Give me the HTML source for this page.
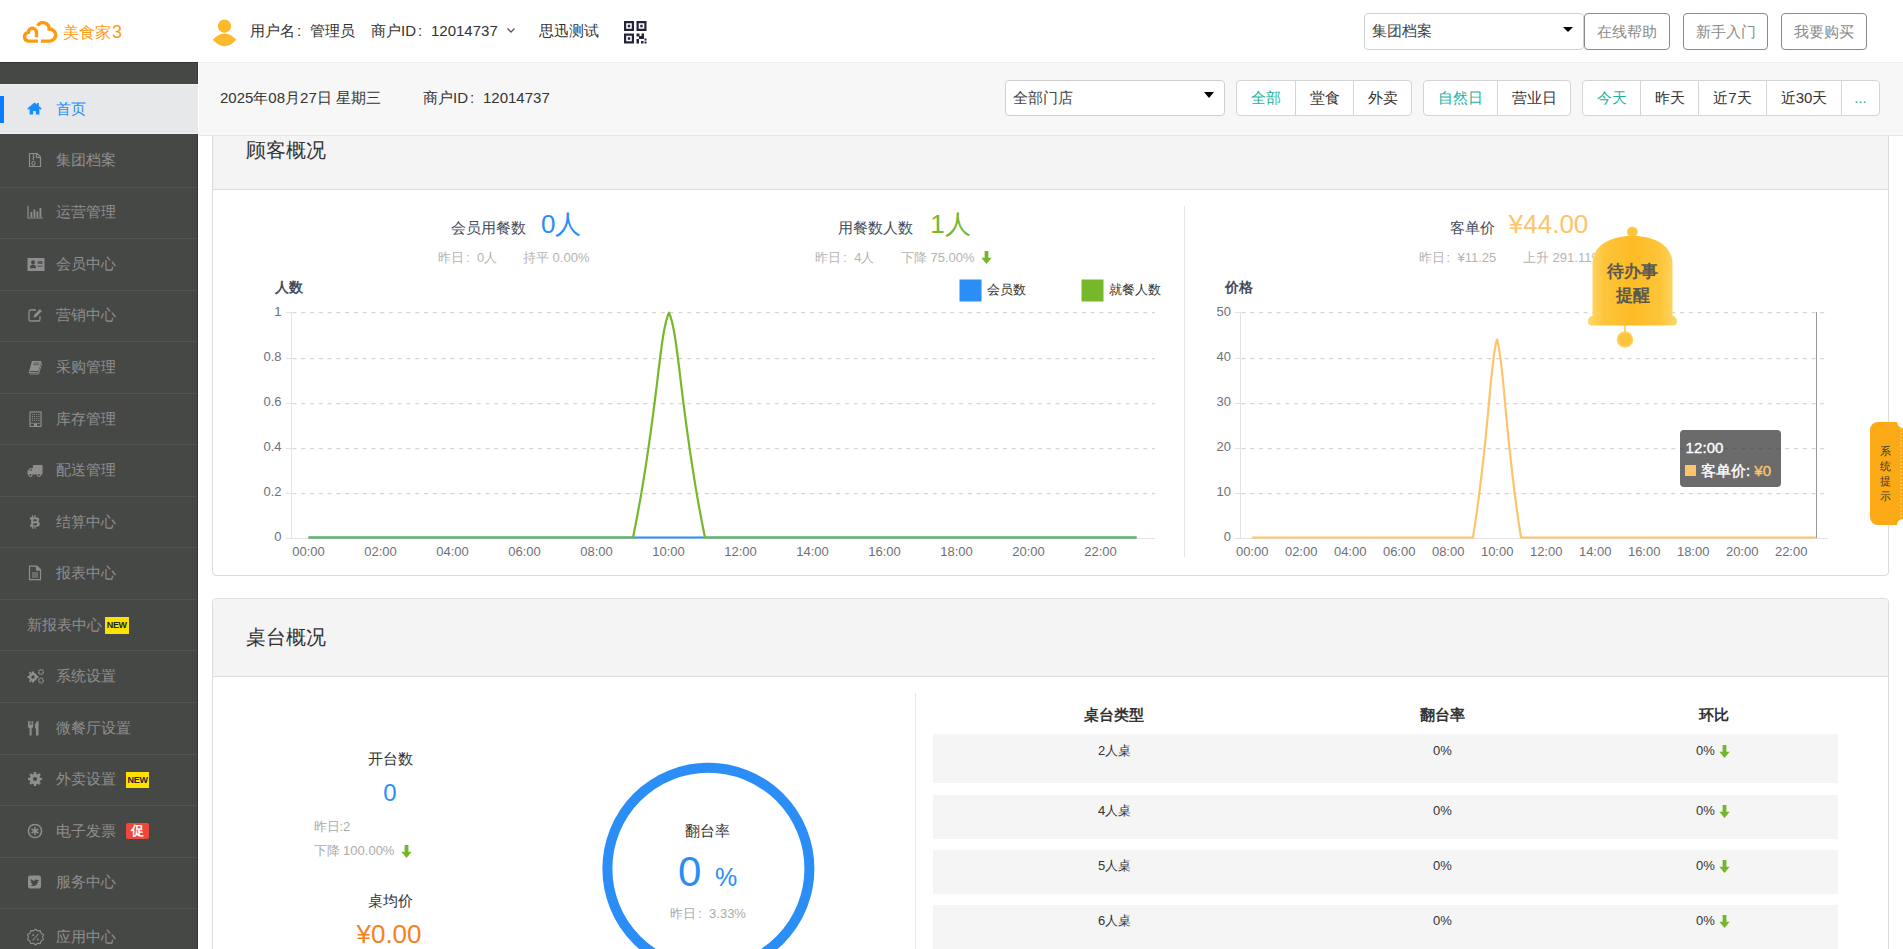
<!DOCTYPE html>
<html><head><meta charset="utf-8">
<style>
*{box-sizing:border-box;margin:0;padding:0}
html,body{width:1903px;height:949px;overflow:hidden;background:#fff;font-family:"Liberation Sans",sans-serif;color:#333}
.t{position:absolute;white-space:nowrap;line-height:20px}
#hdr{position:absolute;left:0;top:0;width:1903px;height:62px;background:#fff}
#side{position:absolute;left:0;top:62px;width:198px;height:887px;background:#464845;border-right:1px solid #363835;border-top:1px solid #363835;overflow:hidden}
#sub{position:absolute;left:199px;top:62px;width:1704px;height:74px;background:#f7f7f7;border-top:1px solid #efefef;border-bottom:1px solid #e6e6e6;z-index:5}
.nav{position:absolute;left:0;width:197px;height:51.54px;border-bottom:1px solid #525451;color:#8e8e8e;font-size:15px}
.nav svg{position:absolute;left:27px;top:50%;margin-top:-8px}
.nav .tx{position:absolute;left:56px;top:50%;margin-top:-10px;line-height:20px;white-space:nowrap}
.new{position:absolute;background:#ffe100;color:#222;font-size:9px;font-weight:bold;line-height:16.5px;height:16.5px;width:23.5px;text-align:center;letter-spacing:-0.3px}
.btn{position:absolute;top:13px;height:37px;border:1px solid #8a8a8a;border-radius:4px;color:#8a8a8a;font-size:15px;line-height:35px;text-align:center}
.sel{position:absolute;border:1px solid #cfcfcf;border-radius:4px;background:#fff;font-size:15px;color:#444}
.sel .arr{position:absolute;width:0;height:0;border-left:5px solid transparent;border-right:5px solid transparent;border-top:6px solid #000}
.grp{position:absolute;top:17px;height:36px;border:1px solid #d4d4d4;border-radius:4px;background:#fff;display:flex}
.grp div{height:34px;line-height:34px;font-size:15px;text-align:center;border-left:1px solid #d4d4d4;color:#333}
.grp div:first-child{border-left:none}
.grp .on{color:#1fb29b}
.card{position:absolute;left:212px;width:1677px;border:1px solid #dcdcdc;border-radius:4px;background:#fff;overflow:hidden}
.chd{position:absolute;left:0;top:0;width:100%;height:78px;background:#f4f4f4;border-bottom:1px solid #dcdcdc;font-size:20px;color:#333;line-height:77px;padding-left:33px}
.nv{position:absolute;left:0;width:197px;border-bottom:1px solid #525451}
.ni{position:absolute;left:27px;width:18px;height:16px}
.ni svg{display:block}
.nt{position:absolute;font-size:15px;color:#8e8e8e;line-height:20px;white-space:nowrap}
.cu{position:absolute;width:23px;height:16px;background:#f0473b;color:#fff;font-size:13px;line-height:16px;text-align:center;border-radius:2px;font-weight:bold}
.cl{display:inline-block;width:1em;text-indent:2px}
</style></head><body>
<!-- HEADER -->
<div id="hdr">
  <svg style="position:absolute;left:22px;top:21px" width="36" height="23" viewBox="0 0 36 23">
    <path d="M14.5,16.3V11.4A4.1,4.1 0 0,0 6.3,11.4A4.4,4.4 0 0,0 6.3,20.1H15.9M15.5,4.6A6.3,6.3 0 0,1 27.1,8.0A6.6,6.05 0 0,1 27.1,20.1H18.9" fill="none" stroke="#ff9a10" stroke-width="3.4"/>
  </svg>
  <div class="t" style="left:63px;top:21px;font-size:16px;color:#ff9a10;line-height:22px">美食家<span style="font-size:18px;margin-left:1px">3</span></div>
  <svg style="position:absolute;left:212px;top:19px" width="26" height="28" viewBox="212 19 26 28">
    <circle cx="224.5" cy="26.2" r="6.6" fill="#fcb92c"/>
    <path d="M212.8,39.8Q224.5,27 236.2,39.8Q224.5,52.6 212.8,39.8Z" fill="#fcb92c"/>
  </svg>
  <div class="t" style="left:250px;top:21px;font-size:15px;color:#333">用户名<span class="cl">:</span>管理员</div>
  <div class="t" style="left:371px;top:21px;font-size:15px;color:#333">商户ID<span class="cl">:</span>12014737</div>
  <svg style="position:absolute;left:506px;top:27px" width="10" height="7" viewBox="0 0 10 7"><path d="M1.5,1.5L5,5L8.5,1.5" fill="none" stroke="#555" stroke-width="1.3"/></svg>
  <div class="t" style="left:539px;top:21px;font-size:15px;color:#333">思迅测试</div>
  <svg style="position:absolute;left:624px;top:21px" width="23" height="23" viewBox="0 0 23 23" fill="#23243a">
    <path d="M0,0h10v10h-10zM2.2,2.2v5.6h5.6v-5.6zM3.8,3.8h2.4v2.4h-2.4z M12.5,0h10v10h-10zM14.7,2.2v5.6h5.6v-5.6zM16.3,3.8h2.4v2.4h-2.4z M0,12.5h10v10h-10zM2.2,14.7v5.6h5.6v-5.6zM3.8,16.3h2.4v2.4h-2.4z M12.5,12.5h3v3h-3zM17.5,12.5h2.5v2.5h-2.5zM15,15h5v3h-5zM12.5,18h2.5v4.5h-2.5zM17,20h2.5v2.5h-2.5zM20.5,17.5h2v2h-2zM20.5,20.5h2v2h-2z"/>
  </svg>
  <div class="sel" style="left:1364px;top:13px;width:220px;height:37px">
    <div class="t" style="left:7px;top:7px">集团档案</div>
    <div class="arr" style="left:198px;top:13px;border-top-width:5px"></div>
  </div>
  <div class="btn" style="left:1584px;width:86px">在线帮助</div>
  <div class="btn" style="left:1683px;width:85px">新手入门</div>
  <div class="btn" style="left:1781px;width:86px">我要购买</div>
</div>
<!-- SIDEBAR -->
<div id="side"></div>
<div style="position:absolute;left:0;top:84px;width:198px;height:50px;background:#e7e8ea;border-top:1px solid #f0f0f0;border-bottom:1px solid #f0f0f0"></div>
<div style="position:absolute;left:0;top:95.6px;width:4px;height:27.5px;background:#0a7cff"></div>
<svg style="position:absolute;left:27px;top:102px" width="15" height="13" viewBox="0 0 15 13"><path d="M7.5,0.5L0.3,6.6l1.1,1.1L2.6,6.7V12.5h3.6V9h2.6v3.5h3.6V6.7l1.2,1l1.1,-1.1L11.8,4.1V1h-1.9v1.5z" fill="#1a8cff"/></svg>
<div class="nt" style="left:56px;top:98.5px;color:#1a8cff">首页</div>
<div class="nv" style="top:134.00px;height:53.60px"></div>
<div class="ni" style="top:152.30px"><svg width="16" height="16" viewBox="0 0 16 16"><path d="M2.5,1.5h7.5l3.5,3.5v9.5h-11z" fill="none" stroke="#8e8e8e" stroke-width="1.2"/><path d="M9.5,1.5v4h4" fill="none" stroke="#8e8e8e" stroke-width="1.2"/><path d="M6,2v1h1v1h-1v1h1v1h-1v1.5h1" fill="none" stroke="#8e8e8e" stroke-width="0.9"/><ellipse cx="6.5" cy="11.2" rx="1.6" ry="2" fill="none" stroke="#8e8e8e" stroke-width="1.1"/></svg></div>
<div class="nt" style="left:56px;top:150.30px">集团档案</div>
<div class="nv" style="top:186.60px;height:52.54px"></div>
<div class="ni" style="top:204.37px"><svg width="16" height="16" viewBox="0 0 16 16"><path d="M1,2v12h15" fill="none" stroke="#8e8e8e" stroke-width="1.2"/><rect x="3.5" y="8" width="1.8" height="5.3" fill="#8e8e8e"/><rect x="6.5" y="5.5" width="1.8" height="7.8" fill="#8e8e8e"/><rect x="9.5" y="7.5" width="1.8" height="5.8" fill="#8e8e8e"/><rect x="12.5" y="4" width="1.8" height="9.3" fill="#8e8e8e"/></svg></div>
<div class="nt" style="left:56px;top:202.37px">运营管理</div>
<div class="nv" style="top:238.14px;height:52.54px"></div>
<div class="ni" style="top:255.91px"><svg width="18" height="16" viewBox="0 0 18 16"><path d="M0.5,2h17v13h-17z" fill="#8e8e8e"/><circle cx="6" cy="6.3" r="2" fill="#464845"/><path d="M3,12.2c0,-3 1.5,-3.6 3,-3.6s3,0.6 3,3.6z" fill="#464845"/><rect x="10.5" y="5" width="5" height="3" fill="#5a5a58"/><rect x="10.5" y="9.6" width="5" height="1.2" fill="#5a5a58"/></svg></div>
<div class="nt" style="left:56px;top:253.91px">会员中心</div>
<div class="nv" style="top:289.68px;height:52.54px"></div>
<div class="ni" style="top:307.45px"><svg width="16" height="16" viewBox="0 0 16 16"><path d="M9,3H3.5a1.5,1.5 0 0,0 -1.5,1.5v8a1.5,1.5 0 0,0 1.5,1.5h8a1.5,1.5 0 0,0 1.5,-1.5V9" fill="none" stroke="#8e8e8e" stroke-width="1.3"/><path d="M6.5,10.5l0.6,-2.6l5.8,-5.8l2,2l-5.8,5.8z" fill="#8e8e8e"/></svg></div>
<div class="nt" style="left:56px;top:305.45px">营销中心</div>
<div class="nv" style="top:341.22px;height:52.54px"></div>
<div class="ni" style="top:358.99px"><svg width="16" height="16" viewBox="0 0 16 16"><path d="M5,2h9.5l-3.5,12h-9.5z" fill="#8e8e8e"/><path d="M2.8,12.6h8.2" stroke="#464845" stroke-width="1"/><path d="M6.5,4h6M6.2,5.7h6" stroke="#5e5e5c" stroke-width="1"/><path d="M14.8,4l-3.2,11h-9" fill="none" stroke="#8e8e8e" stroke-width="0.9"/></svg></div>
<div class="nt" style="left:56px;top:356.99px">采购管理</div>
<div class="nv" style="top:392.76px;height:52.54px"></div>
<div class="ni" style="top:410.53px"><svg width="16" height="16" viewBox="0 0 16 16"><rect x="3" y="1" width="11" height="14.5" fill="none" stroke="#8e8e8e" stroke-width="1.2"/><path d="M5.5,3v7.5M7.6,3v7.5M9.8,3v7.5M11.9,3v7.5" stroke="#8e8e8e" stroke-width="1" stroke-dasharray="1,1"/><rect x="7" y="12.5" width="3" height="3" fill="#8e8e8e"/><path d="M3.5,12.3h10" stroke="#8e8e8e" stroke-width="0.8"/></svg></div>
<div class="nt" style="left:56px;top:408.53px">库存管理</div>
<div class="nv" style="top:444.30px;height:52.54px"></div>
<div class="ni" style="top:462.07px"><svg width="16" height="16" viewBox="0 0 16 16"><path d="M6,3h9.5v9.5h-9.5z" fill="#8e8e8e"/><path d="M6,6h-3l-2.5,3v3.5h5.5z" fill="#8e8e8e"/><path d="M2,8.8l1.5,-2h1.5v2z" fill="#5e5e5c"/><circle cx="3.5" cy="13" r="2" fill="#8e8e8e"/><circle cx="12" cy="13" r="2" fill="#8e8e8e"/><circle cx="3.5" cy="13" r="0.9" fill="#464845"/><circle cx="12" cy="13" r="0.9" fill="#464845"/></svg></div>
<div class="nt" style="left:56px;top:460.07px">配送管理</div>
<div class="nv" style="top:495.84px;height:52.54px"></div>
<div class="ni" style="top:513.61px"><svg width="16" height="16" viewBox="0 0 16 16"><path d="M3,3.2h6.2c2,0 3,1 3,2.4c0,1 -0.6,1.7 -1.4,2c1.2,0.3 2,1.1 2,2.4c0,1.7 -1.2,2.8 -3.3,2.8h-6.5v-2.3h1.2v-5h-1.2z M6.3,5.3v2h2.4c0.7,0 1.1,-0.4 1.1,-1s-0.4,-1 -1.1,-1z M6.3,9.2v2.2h2.7c0.8,0 1.2,-0.4 1.2,-1.1s-0.4,-1.1 -1.2,-1.1z" fill="#8e8e8e"/><path d="M5.5,1.3v2M8,1.3v2M5.5,12.7v2M8,12.7v2" stroke="#8e8e8e" stroke-width="1.3"/></svg></div>
<div class="nt" style="left:56px;top:511.61px">结算中心</div>
<div class="nv" style="top:547.38px;height:52.54px"></div>
<div class="ni" style="top:565.15px"><svg width="16" height="16" viewBox="0 0 16 16"><path d="M2.5,1.2h7.5l3.5,3.5v10h-11z" fill="none" stroke="#8e8e8e" stroke-width="1.2"/><path d="M9.5,1.2v4h4" fill="#8e8e8e" stroke="#8e8e8e" stroke-width="1"/><path d="M5,8h6M5,10h6M5,12h6" stroke="#8e8e8e" stroke-width="1"/></svg></div>
<div class="nt" style="left:56px;top:563.15px">报表中心</div>
<div class="nv" style="top:598.92px;height:52.54px"></div>
<div class="nt" style="left:27px;top:614.69px">新报表中心</div>
<div class="new" style="left:105px;top:617.19px">NEW</div>
<div class="nv" style="top:650.46px;height:52.54px"></div>
<div class="ni" style="top:668.23px"><svg width="18" height="16" viewBox="0 0 18 16"><g fill="#8e8e8e"><circle cx="6" cy="9" r="4.2"/><path d="M5,3.5h2v2h-2zM5,12.5h2v2h-2zM0.5,8h2v2h-2zM9.5,8h2v2h-2zM1.8,4.8l1.4,-1.4l1.4,1.4l-1.4,1.4zM7.4,10.4l1.4,-1.4l1.4,1.4l-1.4,1.4zM1.8,13.2l1.4,1.4l1.4,-1.4l-1.4,-1.4zM7.4,7.6l1.4,1.4l1.4,-1.4l-1.4,-1.4z"/></g><circle cx="6" cy="9" r="1.7" fill="#464845"/><circle cx="14" cy="4" r="2.3" fill="none" stroke="#8e8e8e" stroke-width="1.6" stroke-dasharray="1.2,0.6"/><circle cx="14" cy="12.5" r="2.3" fill="none" stroke="#8e8e8e" stroke-width="1.6" stroke-dasharray="1.2,0.6"/></svg></div>
<div class="nt" style="left:56px;top:666.23px">系统设置</div>
<div class="nv" style="top:702.00px;height:52.54px"></div>
<div class="ni" style="top:719.77px"><svg width="16" height="16" viewBox="0 0 16 16"><path d="M1,1v5c0,1.3 0.8,2 1.6,2.2v7.3h2v-7.3c0.8,-0.2 1.6,-0.9 1.6,-2.2v-5h-1v4h-0.8v-4h-1v4h-0.8v-4z" fill="#8e8e8e"/><path d="M9,15.5v-6.5c-0.8,-0.5 -1,-1.5 -1,-3c0,-3 1.5,-5 3.5,-5v14.5z" fill="#8e8e8e"/></svg></div>
<div class="nt" style="left:56px;top:717.77px">微餐厅设置</div>
<div class="nv" style="top:753.54px;height:52.54px"></div>
<div class="ni" style="top:771.31px"><svg width="16" height="16" viewBox="0 0 16 16"><g fill="#8e8e8e"><circle cx="8" cy="8" r="5.2"/><path d="M6.7,1h2.6v3h-2.6zM6.7,12h2.6v3h-2.6zM1,6.7h3v2.6h-3zM12,6.7h3v2.6h-3zM2.2,4.1l1.9,-1.9l2,2l-1.9,1.9zM10,11.9l1.9,-1.9l2,2l-1.9,1.9zM2.2,11.9l1.9,1.9l2,-2l-1.9,-1.9zM10,4.1l1.9,1.9l2,-2l-1.9,-1.9z"/></g><circle cx="8" cy="8" r="2.1" fill="#464845"/></svg></div>
<div class="nt" style="left:56px;top:769.31px">外卖设置</div>
<div class="new" style="left:125.8px;top:771.81px">NEW</div>
<div class="nv" style="top:805.08px;height:52.54px"></div>
<div class="ni" style="top:822.85px"><svg width="16" height="16" viewBox="0 0 16 16"><circle cx="8" cy="8" r="6.6" fill="none" stroke="#8e8e8e" stroke-width="1.5"/><path d="M8,4v8M4.5,6l7,4M4.5,10l7,-4" stroke="#8e8e8e" stroke-width="1.5"/></svg></div>
<div class="nt" style="left:56px;top:820.85px">电子发票</div>
<div class="cu" style="left:126px;top:822.85px">促</div>
<div class="nv" style="top:856.62px;height:52.54px"></div>
<div class="ni" style="top:874.39px"><svg width="16" height="16" viewBox="0 0 16 16"><rect x="1" y="1.5" width="13" height="13" rx="2" fill="#8e8e8e"/><path d="M3.5,11.5c2.5,1.2 7,0.5 7.5,-4.3l1.3,-1.2l-1.5,0.3c-0.5,-1.2 -2.5,-1.3 -3,0.5c-1.5,0 -3,-0.8 -4,-1.8c-0.5,1.2 0,2.3 0.8,2.8l-0.8,0c0.2,1 1,1.5 1.6,1.6l-0.8,0.2c0.3,0.7 1,1 1.7,1c-1,0.7 -2,0.9 -2.8,0.9z" fill="#464845"/></svg></div>
<div class="nt" style="left:56px;top:872.39px">服务中心</div>
<div class="nv" style="top:908.16px;height:52.54px"></div>
<div class="ni" style="top:928.93px"><svg width="19" height="19" viewBox="0 0 19 19" style="margin-top:-1px;margin-left:-1px"><path d="M9.5,1.2l2.1,1.7l2.7,-0.3l0.8,2.6l2.4,1.4l-1,2.5l1,2.5l-2.4,1.4l-0.8,2.6l-2.7,-0.3l-2.1,1.7l-2.1,-1.7l-2.7,0.3l-0.8,-2.6l-2.4,-1.4l1,-2.5l-1,-2.5l2.4,-1.4l0.8,-2.6l2.7,0.3z" fill="none" stroke="#8e8e8e" stroke-width="1.1" stroke-linejoin="round"/><path d="M6.5,12.5l6,-6.5" stroke="#8e8e8e" stroke-width="1.1"/><circle cx="7.2" cy="7.2" r="0.9" fill="#8e8e8e"/><circle cx="11.8" cy="11.5" r="0.9" fill="#8e8e8e"/></svg></div>
<div class="nt" style="left:56px;top:926.93px">应用中心</div>

<!-- SUBHEADER -->
<div id="sub">
  <div class="t" style="left:21px;top:25px;font-size:15px;color:#333">2025年08月27日 星期三</div>
  <div class="t" style="left:224px;top:25px;font-size:15px;color:#333">商户ID<span class="cl">:</span>12014737</div>
  <div class="sel" style="left:806px;top:17px;width:220px;height:36px">
    <div class="t" style="left:7px;top:7px">全部门店</div>
    <div class="arr" style="left:198px;top:11px"></div>
  </div>
  <div class="grp" style="left:1037px;width:176px"><div class="on" style="width:58px">全部</div><div style="width:58px">堂食</div><div style="width:58px">外卖</div></div>
  <div class="grp" style="left:1224px;width:148px"><div class="on" style="width:73px">自然日</div><div style="width:73px">营业日</div></div>
  <div class="grp" style="left:1383px;width:298px"><div class="on" style="width:57px">今天</div><div style="width:58px">昨天</div><div style="width:68px">近7天</div><div style="width:75px">近30天</div><div class="on" style="width:38px">...</div></div>
</div>
<!-- CARDS -->
<div class="card" style="top:111px;height:465px"><div class="chd">顾客概况</div></div>
<div class="card" style="top:598px;height:400px"><div class="chd">桌台概况</div></div>
<!--MAIN-->
<svg style="position:absolute;left:0;top:0" width="1903" height="949" viewBox="0 0 1903 949"><line x1="1184.5" y1="206" x2="1184.5" y2="557" stroke="#e6e6e6"/><rect x="959.5" y="279.5" width="22" height="22" fill="#2a8ef6"/><rect x="1081.5" y="279.5" width="22" height="22" fill="#76b82a"/><line x1="291" y1="312.7" x2="1155" y2="312.7" stroke="#d6d6d6" stroke-width="1.3" stroke-dasharray="4,4.77" stroke-dashoffset="-1.5"/><line x1="286" y1="312.5" x2="291" y2="312.5" stroke="#e3e3e3"/><line x1="291" y1="358.7" x2="1155" y2="358.7" stroke="#d6d6d6" stroke-width="1.3" stroke-dasharray="4,4.77" stroke-dashoffset="-1.5"/><line x1="286" y1="358.5" x2="291" y2="358.5" stroke="#e3e3e3"/><line x1="291" y1="403.7" x2="1155" y2="403.7" stroke="#d6d6d6" stroke-width="1.3" stroke-dasharray="4,4.77" stroke-dashoffset="-1.5"/><line x1="286" y1="403.5" x2="291" y2="403.5" stroke="#e3e3e3"/><line x1="291" y1="448.7" x2="1155" y2="448.7" stroke="#d6d6d6" stroke-width="1.3" stroke-dasharray="4,4.77" stroke-dashoffset="-1.5"/><line x1="286" y1="448.5" x2="291" y2="448.5" stroke="#e3e3e3"/><line x1="291" y1="493.7" x2="1155" y2="493.7" stroke="#d6d6d6" stroke-width="1.3" stroke-dasharray="4,4.77" stroke-dashoffset="-1.5"/><line x1="286" y1="493.5" x2="291" y2="493.5" stroke="#e3e3e3"/><line x1="286" y1="538.5" x2="291" y2="538.5" stroke="#e3e3e3"/><line x1="291" y1="538.5" x2="1155" y2="538.5" stroke="#e3e3e3"/><line x1="291.5" y1="312" x2="291.5" y2="538" stroke="#e3e3e3"/><line x1="1240" y1="312.7" x2="1828" y2="312.7" stroke="#d6d6d6" stroke-width="1.3" stroke-dasharray="4,4.77" stroke-dashoffset="-1.5"/><line x1="1235" y1="312.5" x2="1240" y2="312.5" stroke="#e3e3e3"/><line x1="1240" y1="358.7" x2="1828" y2="358.7" stroke="#d6d6d6" stroke-width="1.3" stroke-dasharray="4,4.77" stroke-dashoffset="-1.5"/><line x1="1235" y1="358.5" x2="1240" y2="358.5" stroke="#e3e3e3"/><line x1="1240" y1="403.7" x2="1828" y2="403.7" stroke="#d6d6d6" stroke-width="1.3" stroke-dasharray="4,4.77" stroke-dashoffset="-1.5"/><line x1="1235" y1="403.5" x2="1240" y2="403.5" stroke="#e3e3e3"/><line x1="1240" y1="448.7" x2="1828" y2="448.7" stroke="#d6d6d6" stroke-width="1.3" stroke-dasharray="4,4.77" stroke-dashoffset="-1.5"/><line x1="1235" y1="448.5" x2="1240" y2="448.5" stroke="#e3e3e3"/><line x1="1240" y1="493.7" x2="1828" y2="493.7" stroke="#d6d6d6" stroke-width="1.3" stroke-dasharray="4,4.77" stroke-dashoffset="-1.5"/><line x1="1235" y1="493.5" x2="1240" y2="493.5" stroke="#e3e3e3"/><line x1="1235" y1="538.5" x2="1240" y2="538.5" stroke="#e3e3e3"/><line x1="1240" y1="538.5" x2="1828" y2="538.5" stroke="#e3e3e3"/><line x1="1240.5" y1="312" x2="1240.5" y2="538" stroke="#e3e3e3"/><line x1="1816.5" y1="312" x2="1816.5" y2="538" stroke="#9a9a9a"/><path d="M308.5,537.5H1136.5" stroke="#2a8ef6" stroke-width="2.2" fill="none"/><path d="M308.5,537.5H633C657,422.5 659,332.7 669,312.7C679,332.7 681,422.5 705,537.5H1136.5" stroke="#76b82a" stroke-width="2.2" fill="none" stroke-linejoin="round"/><path d="M1252.25,537.5H1473C1489.3,436.3 1490.2,357.2 1497,339.6C1503.8,357.2 1504.7,436.3 1521,537.5H1815.75" stroke="#fdc46b" stroke-width="2.2" fill="none" stroke-linejoin="round"/><line x1="915.5" y1="693" x2="915.5" y2="949" stroke="#e6e6e6"/><circle cx="708.4" cy="868.7" r="101" fill="none" stroke="#2a8ef6" stroke-width="10"/></svg>
<div class="t" style="left:451.0px;top:216.5px;font-size:15px;line-height:21px;color:#464c5b;">会员用餐数</div>
<div class="t" style="left:541.0px;top:206.0px;font-size:26px;line-height:36px;color:#2a8ef6;">0人</div>
<div class="t" style="left:438.0px;top:249.0px;font-size:13px;line-height:18px;color:#b4b4b4;">昨日<span class="cl">:</span>0人</div>
<div class="t" style="left:523.0px;top:249.0px;font-size:13px;line-height:18px;color:#b4b4b4;">持平 0.00%</div>
<div class="t" style="left:838.4px;top:216.5px;font-size:15px;line-height:21px;color:#464c5b;">用餐数人数</div>
<div class="t" style="left:930.3px;top:206.0px;font-size:26px;line-height:36px;color:#76b82a;">1人</div>
<div class="t" style="left:815.2px;top:249.0px;font-size:13px;line-height:18px;color:#b4b4b4;">昨日<span class="cl">:</span>4人</div>
<div class="t" style="left:900.9px;top:249.0px;font-size:13px;line-height:18px;color:#b4b4b4;">下降 75.00%</div>
<div class="t" style="left:1449.7px;top:216.5px;font-size:15px;line-height:21px;color:#464c5b;">客单价</div>
<div class="t" style="left:1508.8px;top:206.0px;font-size:26px;line-height:36px;color:#fdc46b;">¥44.00</div>
<div class="t" style="left:1418.5px;top:249.0px;font-size:13px;line-height:18px;color:#b4b4b4;">昨日<span class="cl">:</span>¥11.25</div>
<div class="t" style="left:1523.0px;top:249.0px;font-size:13px;line-height:18px;color:#b4b4b4;">上升 291.11%</div>
<div class="t" style="left:275.0px;top:277.0px;font-size:14px;line-height:20px;color:#464c5b;font-weight:bold">人数</div>
<div class="t" style="left:1224.6px;top:277.0px;font-size:14px;line-height:20px;color:#464c5b;font-weight:bold">价格</div>
<div class="t" style="left:987.0px;top:281.0px;font-size:13px;line-height:18px;color:#333;">会员数</div>
<div class="t" style="left:1108.6px;top:281.0px;font-size:13px;line-height:18px;color:#333;">就餐人数</div>
<div class="t" style="right:1621.5px;top:302.5px;font-size:13px;line-height:18px;color:#6e7079;">1</div>
<div class="t" style="right:1621.5px;top:347.6px;font-size:13px;line-height:18px;color:#6e7079;">0.8</div>
<div class="t" style="right:1621.5px;top:392.6px;font-size:13px;line-height:18px;color:#6e7079;">0.6</div>
<div class="t" style="right:1621.5px;top:437.7px;font-size:13px;line-height:18px;color:#6e7079;">0.4</div>
<div class="t" style="right:1621.5px;top:482.7px;font-size:13px;line-height:18px;color:#6e7079;">0.2</div>
<div class="t" style="right:1621.5px;top:527.8px;font-size:13px;line-height:18px;color:#6e7079;">0</div>
<div class="t" style="right:672.0px;top:302.5px;font-size:13px;line-height:18px;color:#6e7079;">50</div>
<div class="t" style="right:672.0px;top:347.6px;font-size:13px;line-height:18px;color:#6e7079;">40</div>
<div class="t" style="right:672.0px;top:392.6px;font-size:13px;line-height:18px;color:#6e7079;">30</div>
<div class="t" style="right:672.0px;top:437.7px;font-size:13px;line-height:18px;color:#6e7079;">20</div>
<div class="t" style="right:672.0px;top:482.7px;font-size:13px;line-height:18px;color:#6e7079;">10</div>
<div class="t" style="right:672.0px;top:527.8px;font-size:13px;line-height:18px;color:#6e7079;">0</div>
<div class="t" style="left:308.5px;top:543.0px;width:0;font-size:13px;line-height:18px;color:#6e7079;"><span style="position:absolute;left:0;transform:translateX(-50%)">00:00</span></div>
<div class="t" style="left:1252.2px;top:543.0px;width:0;font-size:13px;line-height:18px;color:#6e7079;"><span style="position:absolute;left:0;transform:translateX(-50%)">00:00</span></div>
<div class="t" style="left:380.5px;top:543.0px;width:0;font-size:13px;line-height:18px;color:#6e7079;"><span style="position:absolute;left:0;transform:translateX(-50%)">02:00</span></div>
<div class="t" style="left:1301.2px;top:543.0px;width:0;font-size:13px;line-height:18px;color:#6e7079;"><span style="position:absolute;left:0;transform:translateX(-50%)">02:00</span></div>
<div class="t" style="left:452.5px;top:543.0px;width:0;font-size:13px;line-height:18px;color:#6e7079;"><span style="position:absolute;left:0;transform:translateX(-50%)">04:00</span></div>
<div class="t" style="left:1350.2px;top:543.0px;width:0;font-size:13px;line-height:18px;color:#6e7079;"><span style="position:absolute;left:0;transform:translateX(-50%)">04:00</span></div>
<div class="t" style="left:524.5px;top:543.0px;width:0;font-size:13px;line-height:18px;color:#6e7079;"><span style="position:absolute;left:0;transform:translateX(-50%)">06:00</span></div>
<div class="t" style="left:1399.2px;top:543.0px;width:0;font-size:13px;line-height:18px;color:#6e7079;"><span style="position:absolute;left:0;transform:translateX(-50%)">06:00</span></div>
<div class="t" style="left:596.5px;top:543.0px;width:0;font-size:13px;line-height:18px;color:#6e7079;"><span style="position:absolute;left:0;transform:translateX(-50%)">08:00</span></div>
<div class="t" style="left:1448.2px;top:543.0px;width:0;font-size:13px;line-height:18px;color:#6e7079;"><span style="position:absolute;left:0;transform:translateX(-50%)">08:00</span></div>
<div class="t" style="left:668.5px;top:543.0px;width:0;font-size:13px;line-height:18px;color:#6e7079;"><span style="position:absolute;left:0;transform:translateX(-50%)">10:00</span></div>
<div class="t" style="left:1497.2px;top:543.0px;width:0;font-size:13px;line-height:18px;color:#6e7079;"><span style="position:absolute;left:0;transform:translateX(-50%)">10:00</span></div>
<div class="t" style="left:740.5px;top:543.0px;width:0;font-size:13px;line-height:18px;color:#6e7079;"><span style="position:absolute;left:0;transform:translateX(-50%)">12:00</span></div>
<div class="t" style="left:1546.2px;top:543.0px;width:0;font-size:13px;line-height:18px;color:#6e7079;"><span style="position:absolute;left:0;transform:translateX(-50%)">12:00</span></div>
<div class="t" style="left:812.5px;top:543.0px;width:0;font-size:13px;line-height:18px;color:#6e7079;"><span style="position:absolute;left:0;transform:translateX(-50%)">14:00</span></div>
<div class="t" style="left:1595.2px;top:543.0px;width:0;font-size:13px;line-height:18px;color:#6e7079;"><span style="position:absolute;left:0;transform:translateX(-50%)">14:00</span></div>
<div class="t" style="left:884.5px;top:543.0px;width:0;font-size:13px;line-height:18px;color:#6e7079;"><span style="position:absolute;left:0;transform:translateX(-50%)">16:00</span></div>
<div class="t" style="left:1644.2px;top:543.0px;width:0;font-size:13px;line-height:18px;color:#6e7079;"><span style="position:absolute;left:0;transform:translateX(-50%)">16:00</span></div>
<div class="t" style="left:956.5px;top:543.0px;width:0;font-size:13px;line-height:18px;color:#6e7079;"><span style="position:absolute;left:0;transform:translateX(-50%)">18:00</span></div>
<div class="t" style="left:1693.2px;top:543.0px;width:0;font-size:13px;line-height:18px;color:#6e7079;"><span style="position:absolute;left:0;transform:translateX(-50%)">18:00</span></div>
<div class="t" style="left:1028.5px;top:543.0px;width:0;font-size:13px;line-height:18px;color:#6e7079;"><span style="position:absolute;left:0;transform:translateX(-50%)">20:00</span></div>
<div class="t" style="left:1742.2px;top:543.0px;width:0;font-size:13px;line-height:18px;color:#6e7079;"><span style="position:absolute;left:0;transform:translateX(-50%)">20:00</span></div>
<div class="t" style="left:1100.5px;top:543.0px;width:0;font-size:13px;line-height:18px;color:#6e7079;"><span style="position:absolute;left:0;transform:translateX(-50%)">22:00</span></div>
<div class="t" style="left:1791.2px;top:543.0px;width:0;font-size:13px;line-height:18px;color:#6e7079;"><span style="position:absolute;left:0;transform:translateX(-50%)">22:00</span></div>
<div class="t" style="left:390.0px;top:748.0px;width:0;font-size:15px;line-height:21px;color:#333;"><span style="position:absolute;left:0;transform:translateX(-50%)">开台数</span></div>
<div class="t" style="left:390.0px;top:776.0px;width:0;font-size:24px;line-height:34px;color:#2a8ef6;"><span style="position:absolute;left:0;transform:translateX(-50%)">0</span></div>
<div class="t" style="left:313.5px;top:818.0px;font-size:13px;line-height:18px;color:#aaa;">昨日:2</div>
<div class="t" style="left:313.5px;top:842.0px;font-size:13px;line-height:18px;color:#aaa;">下降 100.00%</div>
<div class="t" style="left:390.0px;top:890.0px;width:0;font-size:15px;line-height:21px;color:#333;"><span style="position:absolute;left:0;transform:translateX(-50%)">桌均价</span></div>
<div class="t" style="left:389.0px;top:916.0px;width:0;font-size:26px;line-height:36px;color:#f5821f;"><span style="position:absolute;left:0;transform:translateX(-50%)">¥0.00</span></div>
<div class="t" style="left:707.5px;top:819.5px;width:0;font-size:15px;line-height:21px;color:#333;"><span style="position:absolute;left:0;transform:translateX(-50%)">翻台率</span></div>
<div class="t" style="left:678.0px;top:842.0px;font-size:42px;line-height:59px;color:#2a8ef6;">0</div>
<div class="t" style="left:715.0px;top:860.0px;font-size:25px;line-height:35px;color:#2a8ef6;">%</div>
<div class="t" style="left:708.0px;top:904.5px;width:0;font-size:13px;line-height:18px;color:#aaa;"><span style="position:absolute;left:0;transform:translateX(-50%)">昨日<span class="cl">:</span>3.33%</span></div>
<div class="t" style="left:1114.3px;top:704.0px;width:0;font-size:15px;line-height:21px;color:#333;font-weight:bold"><span style="position:absolute;left:0;transform:translateX(-50%)">桌台类型</span></div>
<div class="t" style="left:1442.7px;top:704.0px;width:0;font-size:15px;line-height:21px;color:#333;font-weight:bold"><span style="position:absolute;left:0;transform:translateX(-50%)">翻台率</span></div>
<div class="t" style="left:1713.7px;top:704.0px;width:0;font-size:15px;line-height:21px;color:#333;font-weight:bold"><span style="position:absolute;left:0;transform:translateX(-50%)">环比</span></div>
<div style="position:absolute;left:933px;top:733.7px;width:905px;height:49.6px;background:#f5f5f5"></div>
<div class="t" style="left:1114.5px;top:742.0px;width:0;font-size:13px;line-height:18px;color:#333;"><span style="position:absolute;left:0;transform:translateX(-50%)">2人桌</span></div>
<div class="t" style="left:1442.5px;top:742.0px;width:0;font-size:13px;line-height:18px;color:#333;"><span style="position:absolute;left:0;transform:translateX(-50%)">0%</span></div>
<div class="t" style="left:1696.0px;top:742.0px;font-size:13px;line-height:18px;color:#333;">0%</div>
<div style="position:absolute;left:933px;top:794.8px;width:905px;height:44.4px;background:#f5f5f5"></div>
<div class="t" style="left:1114.5px;top:802.0px;width:0;font-size:13px;line-height:18px;color:#333;"><span style="position:absolute;left:0;transform:translateX(-50%)">4人桌</span></div>
<div class="t" style="left:1442.5px;top:802.0px;width:0;font-size:13px;line-height:18px;color:#333;"><span style="position:absolute;left:0;transform:translateX(-50%)">0%</span></div>
<div class="t" style="left:1696.0px;top:802.0px;font-size:13px;line-height:18px;color:#333;">0%</div>
<div style="position:absolute;left:933px;top:849.6px;width:905px;height:44.4px;background:#f5f5f5"></div>
<div class="t" style="left:1114.5px;top:857.0px;width:0;font-size:13px;line-height:18px;color:#333;"><span style="position:absolute;left:0;transform:translateX(-50%)">5人桌</span></div>
<div class="t" style="left:1442.5px;top:857.0px;width:0;font-size:13px;line-height:18px;color:#333;"><span style="position:absolute;left:0;transform:translateX(-50%)">0%</span></div>
<div class="t" style="left:1696.0px;top:857.0px;font-size:13px;line-height:18px;color:#333;">0%</div>
<div style="position:absolute;left:933px;top:905.4px;width:905px;height:44.4px;background:#f5f5f5"></div>
<div class="t" style="left:1114.5px;top:912.0px;width:0;font-size:13px;line-height:18px;color:#333;"><span style="position:absolute;left:0;transform:translateX(-50%)">6人桌</span></div>
<div class="t" style="left:1442.5px;top:912.0px;width:0;font-size:13px;line-height:18px;color:#333;"><span style="position:absolute;left:0;transform:translateX(-50%)">0%</span></div>
<div class="t" style="left:1696.0px;top:912.0px;font-size:13px;line-height:18px;color:#333;">0%</div>
<svg style="position:absolute;left:981.0px;top:251.3px" width="11" height="13" viewBox="0 0 11 13"><path d="M3.6,0h3.8v6.8h3.3L5.5,13L0.3,6.8h3.3z" fill="#74b72d"/></svg>
<svg style="position:absolute;left:401.0px;top:845.0px" width="11" height="13" viewBox="0 0 11 13"><path d="M3.6,0h3.8v6.8h3.3L5.5,13L0.3,6.8h3.3z" fill="#74b72d"/></svg>
<svg style="position:absolute;left:1718.7px;top:744.5px" width="11" height="13" viewBox="0 0 11 13"><path d="M3.6,0h3.8v6.8h3.3L5.5,13L0.3,6.8h3.3z" fill="#74b72d"/></svg>
<svg style="position:absolute;left:1718.7px;top:804.5px" width="11" height="13" viewBox="0 0 11 13"><path d="M3.6,0h3.8v6.8h3.3L5.5,13L0.3,6.8h3.3z" fill="#74b72d"/></svg>
<svg style="position:absolute;left:1718.7px;top:859.5px" width="11" height="13" viewBox="0 0 11 13"><path d="M3.6,0h3.8v6.8h3.3L5.5,13L0.3,6.8h3.3z" fill="#74b72d"/></svg>
<svg style="position:absolute;left:1718.7px;top:914.5px" width="11" height="13" viewBox="0 0 11 13"><path d="M3.6,0h3.8v6.8h3.3L5.5,13L0.3,6.8h3.3z" fill="#74b72d"/></svg>
<!--/MAIN-->
<!--EXTRAS-->
<div style="position:absolute;left:1680px;top:430px;width:101px;height:57px;background:rgba(50,50,50,0.72);border-radius:4px"></div>
<div class="t" style="left:1685.5px;top:437.5px;font-size:15px;line-height:20px;color:#fff;-webkit-text-stroke:0.35px #fff;letter-spacing:0.1px">12:00</div>
<div style="position:absolute;left:1685px;top:465px;width:11px;height:11px;background:#fdc46b"></div>
<div class="t" style="left:1701px;top:460.5px;font-size:15px;line-height:20px;color:#fff;-webkit-text-stroke:0.35px #fff">客单价: <span style="color:#fdc46b;-webkit-text-stroke:0.35px #fdc46b">¥0</span></div>
<svg style="position:absolute;left:1580px;top:222px" width="105" height="130" viewBox="1580 222 105 130">
  <defs>
    <linearGradient id="bh" x1="0" y1="0" x2="1" y2="0">
      <stop offset="0" stop-color="#fdd86e"/><stop offset="0.18" stop-color="#fdc53a"/><stop offset="0.5" stop-color="#fdbb25"/><stop offset="0.82" stop-color="#fdc53a"/><stop offset="1" stop-color="#fdd86e"/>
    </linearGradient>
    <radialGradient id="bk"><stop offset="0" stop-color="#fdc43a"/><stop offset="0.7" stop-color="#fdc640"/><stop offset="1" stop-color="#fdd66a"/></radialGradient>
  </defs>
  <circle cx="1632.4" cy="232" r="5.6" fill="url(#bk)"/>
  <path d="M1592.5,316V264C1592.5,246 1609,236 1632.5,236C1656,236 1672.5,246 1672.5,264V316C1675,316 1677,318 1677,321V322C1677,324 1675.5,325.5 1673.5,325.5H1591.5C1589.5,325.5 1588,324 1588,322V321C1588,318 1590,316 1592.5,316Z" fill="url(#bh)"/>
  <line x1="1625" y1="325" x2="1625" y2="333" stroke="#fdc43a" stroke-width="1.5"/>
  <circle cx="1625" cy="339.5" r="8.3" fill="url(#bk)"/>
</svg>
<div class="t" style="left:1632.5px;top:0;width:0"></div>
<div style="position:absolute;left:1592px;top:260px;width:81px;text-align:center;font-size:17px;line-height:24px;font-weight:bold;color:#5b5850">待办事<br>提醒</div>
<svg style="position:absolute;left:1870px;top:422px" width="33" height="103" viewBox="0 0 33 103">
  <path d="M8,0H27A6,6 0 0,0 33,6V97A6,6 0 0,0 27,103H8A8,8 0 0,1 0,95V8A8,8 0 0,1 8,0Z" fill="#fca916"/>
  <line x1="31" y1="6" x2="31" y2="97" stroke="#fde4a8" stroke-width="1" stroke-dasharray="1.5,2"/>
</svg>
<div style="position:absolute;left:1878px;top:444px;width:14px;font-size:11px;line-height:15px;color:#3c3526;text-align:center">系统提示</div>
<!--/EXTRAS-->
</body></html>
